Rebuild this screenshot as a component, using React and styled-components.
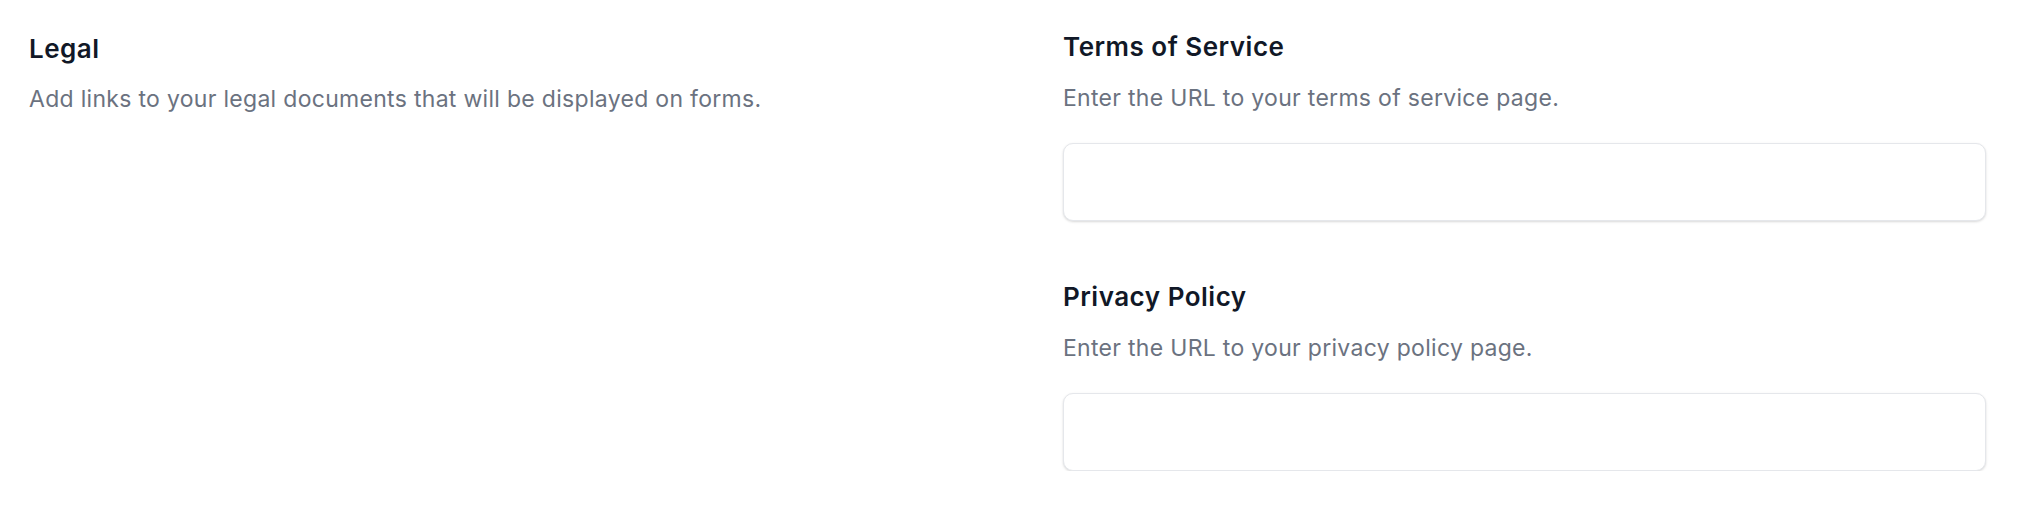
import React from "react";
import styled, { createGlobalStyle } from "styled-components";

const GlobalStyle = createGlobalStyle`
  body {
    margin: 0;
    background: #ffffff;
    font-family: Inter, "Noto Sans", "Liberation Sans", sans-serif;
  }
`;

const Page = styled.div`
  display: grid;
  grid-template-columns: 1fr 1fr;
  column-gap: 111px;
  padding: 31px 42px 0 29px;
`;

const Intro = styled.div`
  padding-top: 2px;
`;

const Fields = styled.div`
  display: flex;
  flex-direction: column;
  gap: 60px;
`;

const Field = styled.div`
  display: flex;
  flex-direction: column;
`;

const Title = styled.h2`
  margin: 0;
  color: #111827;
  font-size: 26px;
  line-height: 32px;
  font-weight: 600;
  letter-spacing: 0.5px;
`;

const Hint = styled.p`
  margin: ${(p) => (p.$tight ? "19px" : "20px")} 0 0;
  color: #6b7280;
  font-size: 23px;
  line-height: 30px;
  letter-spacing: 0.3px;
`;

const Input = styled.input`
  box-sizing: border-box;
  width: 100%;
  height: 78px;
  margin-top: 30px;
  padding: 0 18px;
  border: 1px solid #e5e7eb;
  border-radius: 10px;
  background: #ffffff;
  box-shadow: 0 1px 3px rgba(0, 0, 0, 0.1), 0 1px 2px rgba(0, 0, 0, 0.06);
  font: inherit;
  font-size: 23px;
  outline: none;
`;

const fields = [
  { title: "Terms of Service", hint: "Enter the URL to your terms of service page." },
  { title: "Privacy Policy", hint: "Enter the URL to your privacy policy page." },
];

export default function App() {
  return (
    <>
      <GlobalStyle />
      <Page>
        <Intro>
          <Title>Legal</Title>
          <Hint $tight>Add links to your legal documents that will be displayed on forms.</Hint>
        </Intro>
        <Fields>
          {fields.map((f) => (
            <Field key={f.title}>
              <Title>{f.title}</Title>
              <Hint>{f.hint}</Hint>
              <Input type="url" />
            </Field>
          ))}
        </Fields>
      </Page>
    </>
  );
}
